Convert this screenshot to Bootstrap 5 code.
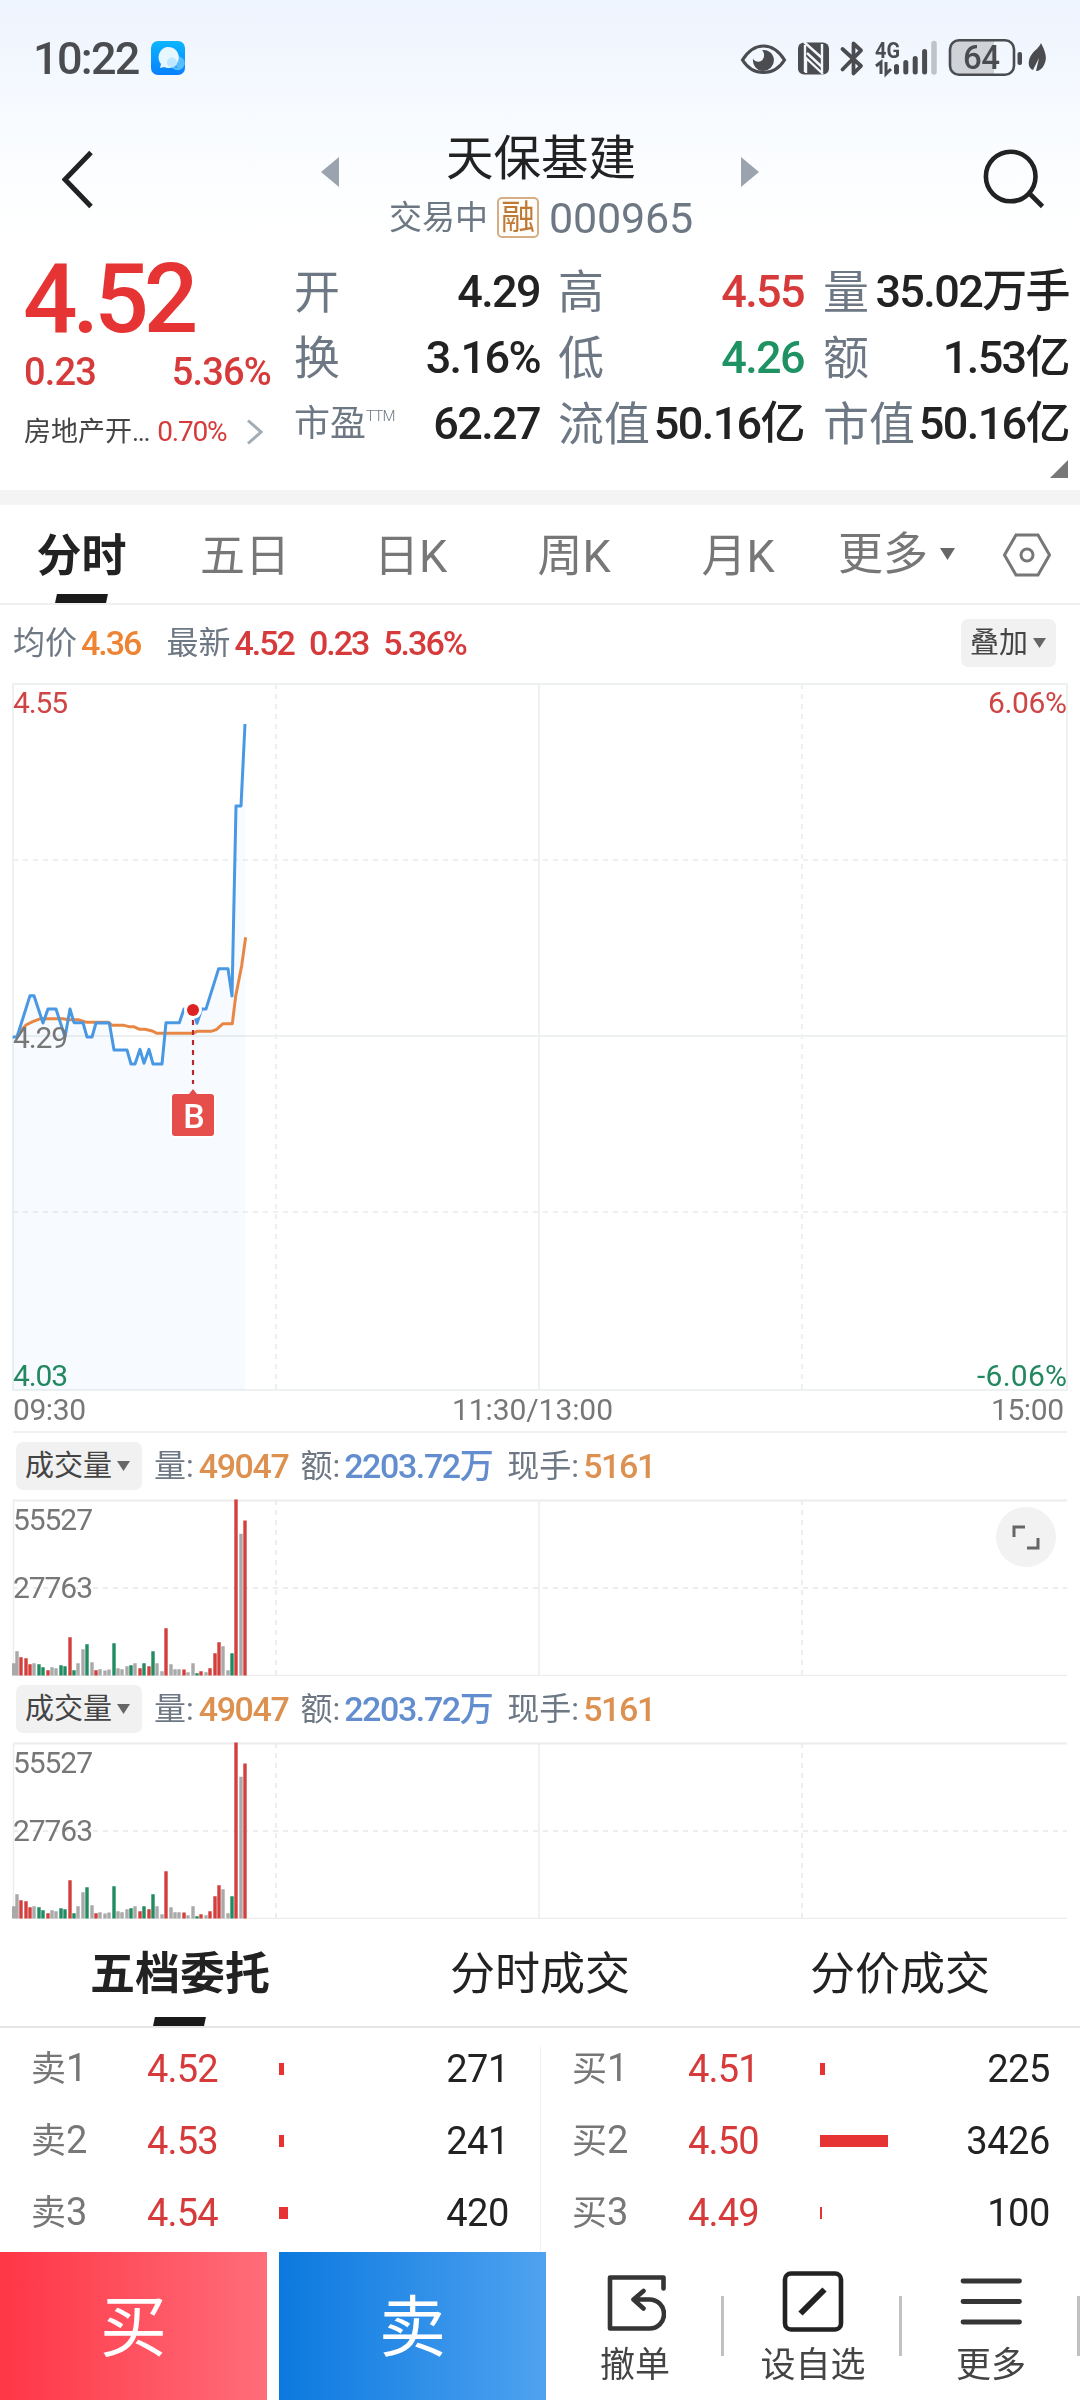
<!DOCTYPE html>
<html lang="zh-CN">
<head>
<meta charset="utf-8">
<meta name="viewport" content="width=device-width, initial-scale=1">
<title>天保基建 000965</title>
<link href="https://cdn.jsdelivr.net/npm/bootstrap@5.3.0/dist/css/bootstrap.min.css" rel="stylesheet">
<style>
  body{width:1080px;height:2400px;overflow:hidden;margin:0;background:#fff;color:#222;font-family:Roboto,"Noto Sans CJK SC",sans-serif;line-height:1;white-space:nowrap}
  svg{display:block;flex:none}
  svg text{font-family:Roboto,"Noto Sans CJK SC",sans-serif}
  .top-area{height:490px;background:linear-gradient(#eef4fe 0,#f5f9ff 90px,#fdfeff 190px,#fff 256px)}
  .status-bar{height:116px;padding:0 25px 0 33px}
  .clock{font-size:45px;font-weight:500;color:#4a4c4f;letter-spacing:-1.7px;line-height:118px;padding-top:2px}
  .stock-head{height:140px;padding:0 0 0 62px}
  .stock-name{font-size:47.5px;line-height:60px;font-weight:400}
  .stock-sub{font-size:33px;color:#6d7884;height:56px}
  .margin-tag{width:42px;height:41px;border:2px solid #d6ad84;border-radius:5px;color:#bf7935;font-size:34px;line-height:36px;background:#fffdf9}
  .code-no{font-size:43px;letter-spacing:-.2px}
  .slate{color:#6d7884}
  .up{color:#d63a3a}.up-strong{color:#e63434}.down{color:#1e9263}
  .quote-left{width:294px;padding-left:24px}
  .last-price{font-size:96px;font-weight:500;letter-spacing:-5px;line-height:86px;height:91px;margin-left:-1px}
  .change-row{font-size:38px;font-weight:500;line-height:44px;width:247px;letter-spacing:-.8px}
  .sector-row{font-size:27px;line-height:44px;color:#444;margin-top:16px}
  .quote-grid{gap:18px;padding-top:3px}
  .quote-col{width:246px}
  .quote-col:last-child{margin-left:1px}
  .quote-cell{height:66px;font-size:46px;line-height:66px}
  .quote-cell b{font-weight:500;letter-spacing:-1.6px;font-size:45px}
  .quote-cell .slate{font-size:46px}
  .quote-cell .pe{font-size:36px}
  .pe sup{font-size:15px;font-weight:300;top:-15px;left:0;line-height:0;letter-spacing:-.8px}
  .band{height:15px;background:#f4f4f4}
  .period-tabs{height:100px;border-bottom:2px solid #f0f0f0;font-size:45px;color:#777;line-height:103px}
  .period-tabs .now{color:#222;font-weight:700}
  .tab-cell{position:relative;text-align:center;height:98px}
  .now::after{content:"";position:absolute;left:50%;bottom:0;width:51px;height:9px;margin-left:-26px;background:#1a1a1a;transform:skewX(-12deg)}
  .info-row{height:71px;padding:5px 24px 0 13px;font-size:32px}
  .info-row b,.vol-head b{font-weight:500;font-size:34px;letter-spacing:-1.4px}
  .info-row b{letter-spacing:-2px}
  .chip{height:48px;background:#f1f1f1;border-radius:7px;font-size:29px;color:#444;padding:0 10px 0 9px}
  .vol-head{height:62px;padding:4px 0 0 16px;font-size:32px;line-height:40px}
  .vol-head .chip{width:126px}
  .amber{color:#dc9150}.azure{color:#628dcf}.tangerine{color:#ee8433}
  .book-tabs{height:109px;border-bottom:2px solid #e5e5e5;font-size:45px;line-height:111px}
  .book-tabs .tab-cell{flex:1;height:107px}
  .book{height:224px;padding-top:5px}
  .book-side{width:540px}
  .book-line{height:72px;line-height:74px;font-size:38px;padding:0 31px 0 31px}
  .book-side + .book-side .book-line,.book-div + .book-side .book-line{padding-left:32px;padding-right:30px}
  .book-div{width:1px;height:206px;background:#f0f0f0;margin-top:14px;margin-right:-1px}
  .lvl{width:116px;color:#777}.lvl i{font-style:normal;font-size:35px}
  .px{width:132px;letter-spacing:-.8px}
  .qty{letter-spacing:-.4px}
  .depth{height:12px;background:#e63434}
  .bottom-bar{height:148px}
  .trade{width:267px;height:148px;color:#fff;font-size:67px;line-height:152px}
  .buy{background:linear-gradient(90deg,#ff3646,#ff6d79);margin-right:12px}
  .sell{background:linear-gradient(90deg,#0b79df,#4fa2f0)}
  .tool{width:178px;position:relative;font-size:35px;color:#444;padding-top:18px}
  .tool::after{content:"";position:absolute;right:0;top:44px;width:3px;height:60px;background:#c1c1c1}
  .tool span{line-height:40px;margin-top:12px}
</style>
</head>
<body class="d-flex flex-column">
<header class="top-area flex-shrink-0">
  <div class="status-bar d-flex align-items-center">
    <span class="clock">10:22</span>
    <svg style="margin-left:12px" width="34" height="34" viewBox="0 0 34 34">
      <defs><linearGradient id="msg" x2="0" y2="1"><stop stop-color="#0cb6ff"/><stop offset="1" stop-color="#0780ff"/></linearGradient></defs>
      <rect width="34" height="34" rx="7" fill="url(#msg)"/><path d="M20 24a7 7 0 1 0 2-7l4 10z" fill="#56bdff"/><path d="M16 6a10.500 10.500 0 1 1-3 20l-4 1 1-4A10.500 10.500 0 0 1 16 6z" fill="#e6f7ff"/><circle cx="21" cy="21.500" r="5" fill="#bfe7ff"/>
    </svg>
    <svg class="ms-auto" width="315" height="44" viewBox="740 36 315 44" fill="#4a4c4f">
      <path d="M742.500 60c5-8 12-14 21-14s16 6 21 14c-5 8-12 12.500-21 12.500S747.500 68 742.500 60z" fill="none" stroke="#4a4c4f" stroke-width="3.200"/>
      <path d="M762 50a10.500 10.500 0 1 1-9 9c2 3 8 4 10 0 2-3 1-7-1-9z"/>
      <rect x="798" y="42.500" width="31" height="32" rx="6"/><path d="M804 42l18 16V44M805 72V45M823 74l-17-16V73M822 44v28" fill="none" stroke="#f3f7fe" stroke-width="2.400"/><path d="M807 53l15 14" stroke="#f3f7fe" stroke-width="2.400"/>
      <path d="M842.500 49l18.500 17-7.500 7.500V43.500l7.500 7-18.500 19" fill="none" stroke="#4a4c4f" stroke-width="3.800" stroke-linecap="round" stroke-linejoin="round"/>
      <text x="875" y="57.500" font-size="22" font-weight="700" textLength="25" lengthAdjust="spacingAndGlyphs">4G</text>
      <path d="M876 66l5-4v12M886 62v12l5-5" fill="none" stroke="#4a4c4f" stroke-width="3"/>
      <path d="M896.500 66.500v5.500M905.800 62.500V72M915.200 58.500V72M924.600 51.500V72" stroke="#4a4c4f" stroke-width="5" stroke-linecap="round"/><path d="M934 43.500V72" stroke="#bfc3c9" stroke-width="5.500" stroke-linecap="round"/>
      <path d="M958 40h36v35h-36q-8 0-8-8V48q0-8 8-8z" fill="#cfd2d7"/><rect x="950" y="40.300" width="64" height="34.500" rx="9" fill="none" stroke="#4a4c4f" stroke-width="2.600"/>
      <rect x="1017.500" y="52" width="4.500" height="13" rx="2"/>
      <text x="963" y="69.300" font-size="33" font-weight="500" textLength="37">64</text>
      <path d="M1041 43c4 8 7 15 3 22-2 4-5 6-8 6l3-13-6 12c-6-2-5-11-1-16 3-4 7-6 9-11z"/>
    </svg>
  </div>
  <div class="stock-head d-flex">
    <svg class="mt-4" width="34" height="76" viewBox="62 140 34 76" fill="none" stroke="#222" stroke-width="5"><path d="M91 152.500 65 179.500 91 206.500"/></svg>
    <div class="d-flex" style="margin-left:225px">
      <svg width="20" height="110" viewBox="321 116 20 110"><path d="M321 172l18-15v30z" fill="#9ba4ae"/></svg>
      <div class="d-flex flex-column align-items-center" style="width:400px;padding-top:13px">
        <div class="stock-name">天保基建</div>
        <div class="stock-sub d-flex align-items-center">交易中<span class="margin-tag d-flex justify-content-center" style="margin-left:9px">融</span><span class="code-no" style="margin-left:10px;padding-top:2px">000965</span></div>
      </div>
      <svg width="20" height="110" viewBox="741 116 20 110"><path d="M759 172l-18-15v30z" fill="#9ba4ae"/></svg>
    </div>
    <svg class="mt-4" style="margin-left:219px" width="66" height="76" viewBox="980 140 66 76" fill="none" stroke="#222" stroke-width="4.600"><circle cx="1010.700" cy="176.500" r="24.800"/><path d="M1029.500 193.500 1042.500 206.500"/></svg>
  </div>
  <div class="d-flex">
    <div class="quote-left">
      <div class="last-price up-strong">4.52</div>
      <div class="change-row up d-flex justify-content-between" style="margin-top:3px"><span>0.23</span><span>5.36%</span></div>
      <div class="sector-row d-flex align-items-center"><span>房地产开<span style="letter-spacing:-1.4px">...</span></span><span class="up" style="font-size:28px;letter-spacing:-1.2px;margin-left:8px">0.70%</span>
        <svg style="margin-left:20px" width="18" height="28" viewBox="0 0 18 28"><path d="M2 2.500 15 14 2 25.500" fill="none" stroke="#a3abb3" stroke-width="3"/></svg></div>
    </div>
    <div class="quote-grid d-flex">
      <div class="quote-col">
        <div class="quote-cell d-flex justify-content-between"><span class="slate">开</span><b>4.29</b></div>
        <div class="quote-cell d-flex justify-content-between"><span class="slate">换</span><b>3.16%</b></div>
        <div class="quote-cell d-flex justify-content-between"><span class="slate pe">市盈<sup>TTM</sup></span><b>62.27</b></div>
      </div>
      <div class="quote-col">
        <div class="quote-cell d-flex justify-content-between"><span class="slate">高</span><b class="up">4.55</b></div>
        <div class="quote-cell d-flex justify-content-between"><span class="slate">低</span><b class="down">4.26</b></div>
        <div class="quote-cell d-flex justify-content-between"><span class="slate">流值</span><b>50.16亿</b></div>
      </div>
      <div class="quote-col">
        <div class="quote-cell d-flex justify-content-between"><span class="slate">量</span><b>35.02万手</b></div>
        <div class="quote-cell d-flex justify-content-between"><span class="slate">额</span><b>1.53亿</b></div>
        <div class="quote-cell d-flex justify-content-between"><span class="slate">市值</span><b>50.16亿</b></div>
        <svg class="ms-auto" style="margin-top:3px;margin-right:1px" width="18" height="18" viewBox="0 0 18 18"><path d="M18 0v18H0z" fill="#777"/></svg>
      </div>
    </div>
  </div>
</header>
<div class="band flex-shrink-0"></div>
<nav class="period-tabs d-flex flex-shrink-0">
  <div class="tab-cell now" style="width:163px">分时</div>
  <div class="tab-cell" style="width:164px">五日</div>
  <div class="tab-cell" style="width:167px">日K</div>
  <div class="tab-cell" style="width:160px">周K</div>
  <div class="tab-cell" style="width:168px">月K</div>
  <div class="tab-cell d-flex align-items-center" style="width:181px;padding-left:16px">更多<svg style="margin-left:12px" width="15" height="12" viewBox="0 0 15 12"><path d="M0 0h15L7.500 12z" fill="#666"/></svg></div>
  <svg style="margin-top:28px" width="48" height="44" viewBox="0 0 48 44" fill="none" stroke="#777" stroke-width="3"><path d="M13 2h22l11.500 20L35 42H13L1.500 22z"/><circle cx="24" cy="22" r="6"/></svg>
</nav>
<div class="info-row d-flex align-items-center flex-shrink-0">
  <span class="slate">均价</span><b class="tangerine" style="margin-left:4px">4.36</b>
  <span class="slate" style="margin-left:26px">最新</span><b class="up" style="margin-left:4px">4.52</b><b class="up" style="margin-left:15px">0.23</b><b class="up" style="margin-left:15px">5.36%</b>
  <span class="chip d-flex align-items-center ms-auto">叠加<svg style="margin-left:5px" width="13" height="10" viewBox="0 0 13 10"><path d="M0 0h13L6.500 10z" fill="#666"/></svg></span>
</div>
<svg class="flex-shrink-0" width="1080" height="757" viewBox="0 676 1080 757">
  <g fill="none" stroke="#edf1f0" stroke-width="2"><path d="M13 684H1067V1390H13zM13 1036H1067M539 684V1390M13 1432H1067"/><path d="M13 860H1067M13 1212H1067M276 684V1390M802 684V1390" stroke="#efefef" stroke-dasharray="5 5"/></g>
  <g transform="translate(0 700) scale(.33333)" fill="none" stroke-linejoin="round">
    <path id="area" fill="#f7fbff" style="mix-blend-mode:multiply"/>
    <path d="M50 1008l28-33 20-10 24-9h68l15 3h30l25 8h65l12 9h35l15 4h14l18 8h16l22 5 14 7h108l12-6h42l16-5 20-18h28l10-82 18-92 12-85" stroke="#e88743" stroke-width="9"/>
    <path id="price" stroke="#4898e3" stroke-width="9"/>
  </g>
  <circle cx="193" cy="1010" r="9" fill="#fff"/><circle cx="193" cy="1010" r="6" fill="#dc2222"/>
  <path d="M193 1020V1084" stroke="#b8292e" stroke-width="2.200" stroke-dasharray="5 5"/>
  <rect x="170" y="1092" width="46" height="46" rx="6" fill="#fff"/><path d="M189 1094l4-5 4 5h14q3 0 3 3v36q0 3-3 3h-36q-3 0-3-3v-36q0-3 3-3z" fill="#e54e4b"/>
  <text x="194" y="1127.500" font-size="34" font-weight="500" fill="#fff" text-anchor="middle">B</text>
  <g font-size="30">
    <g fill="#cf4444"><text x="13" y="713" textLength="55">4.55</text><text x="988" y="713" textLength="79">6.06%</text></g>
    <text x="13" y="1048" textLength="55" fill="#777">4.29</text>
    <g fill="#23885f"><text x="13" y="1386" textLength="55">4.03</text><text x="977" y="1386" textLength="90">-6.06%</text></g>
    <g fill="#777"><text x="13" y="1420" textLength="73">09:30</text><text x="452" y="1420" textLength="161">11:30/13:00</text><text x="991" y="1420" textLength="73">15:00</text></g>
  </g>
</svg>
<section class="flex-shrink-0">
  <div class="vol-head d-flex align-items-center"><span class="chip d-flex align-items-center">成交量<svg style="margin-left:5px" width="13" height="10" viewBox="0 0 13 10"><path d="M0 0h13L6.500 10z" fill="#666"/></svg></span>
    <span class="slate" style="margin-left:12px">量:</span><b class="amber" style="margin-left:5px">49047</b><span class="slate" style="margin-left:12px">额:</span><b class="azure" style="margin-left:4px">2203.72万</b><span class="slate" style="margin-left:15px">现手:</span><b class="amber" style="margin-left:4px">5161</b></div>
  <svg width="1080" height="181" viewBox="0 0 1080 181">
    <g id="volplot"><path d="M13 5.500H1067" stroke="#ececec" stroke-width="2"/><path d="M13 180.500H1067M13.500 5V180M539 5V180" stroke="#ededed" stroke-width="1.500"/><path d="M13 93H1067M276 5V180M802 5V180" stroke="#ededed" stroke-width="2" stroke-dasharray="5 5"/>
      <g font-size="30" fill="#777"><text x="13" y="35" textLength="80">55527</text><text x="13" y="103" textLength="80">27763</text></g>
      <path id="volr" stroke="#d23f3d" stroke-width="3.400"/><path id="vole" stroke="#a9a9a9" stroke-width="3.400"/><path id="volg" stroke="#218c62" stroke-width="3.400"/></g>
    <circle cx="1026" cy="42" r="30" fill="#f2f2f2"/><path d="M1014 42V32h11M1038 43v10h-11" fill="none" stroke="#666" stroke-width="3"/>
  </svg>
</section>
<section class="flex-shrink-0">
  <div class="vol-head d-flex align-items-center"><span class="chip d-flex align-items-center">成交量<svg style="margin-left:5px" width="13" height="10" viewBox="0 0 13 10"><path d="M0 0h13L6.500 10z" fill="#666"/></svg></span>
    <span class="slate" style="margin-left:12px">量:</span><b class="amber" style="margin-left:5px">49047</b><span class="slate" style="margin-left:12px">额:</span><b class="azure" style="margin-left:4px">2203.72万</b><span class="slate" style="margin-left:15px">现手:</span><b class="amber" style="margin-left:4px">5161</b></div>
  <svg width="1080" height="181" viewBox="0 0 1080 181"><use href="#volplot"/></svg>
</section>
<nav class="book-tabs d-flex flex-shrink-0">
  <div class="tab-cell now fw-bold">五档委托</div><div class="tab-cell">分时成交</div><div class="tab-cell">分价成交</div>
</nav>
<section class="book d-flex flex-shrink-0">
  <div class="book-side">
    <div class="book-line d-flex align-items-center"><span class="lvl"><i>卖</i>1</span><span class="px up">4.52</span><span class="depth" style="width:5px"></span><span class="qty ms-auto">271</span></div>
    <div class="book-line d-flex align-items-center"><span class="lvl"><i>卖</i>2</span><span class="px up">4.53</span><span class="depth" style="width:5px"></span><span class="qty ms-auto">241</span></div>
    <div class="book-line d-flex align-items-center"><span class="lvl"><i>卖</i>3</span><span class="px up">4.54</span><span class="depth" style="width:9px"></span><span class="qty ms-auto">420</span></div>
  </div>
  <div class="book-div"></div>
  <div class="book-side">
    <div class="book-line d-flex align-items-center"><span class="lvl"><i>买</i>1</span><span class="px up">4.51</span><span class="depth" style="width:5px"></span><span class="qty ms-auto">225</span></div>
    <div class="book-line d-flex align-items-center"><span class="lvl"><i>买</i>2</span><span class="px up">4.50</span><span class="depth" style="width:68px"></span><span class="qty ms-auto">3426</span></div>
    <div class="book-line d-flex align-items-center"><span class="lvl"><i>买</i>3</span><span class="px up">4.49</span><span class="depth" style="width:2px"></span><span class="qty ms-auto">100</span></div>
  </div>
</section>
<footer class="bottom-bar d-flex flex-shrink-0">
  <div class="trade buy text-center">买</div><div class="trade sell text-center">卖</div>
  <div class="tool d-flex flex-column align-items-center">
    <svg width="62" height="64" viewBox="604.500 2270 62 64" fill="none" stroke="#353535" stroke-width="4.600" stroke-linecap="round" stroke-linejoin="round"><path d="M664 2288.500V2277.500H610.500V2328.500H650a14.500 14.500 0 0 0 0-29H634M644 2291l-10 8.500 10 9"/></svg>
    <span>撤单</span></div>
  <div class="tool d-flex flex-column align-items-center">
    <svg width="62" height="64" viewBox="782.500 2270 62 64" fill="none" stroke="#222" stroke-width="4.600"><rect x="785.500" y="2273.500" width="56" height="56" rx="6"/><path d="M825 2289.500 801 2313.500" stroke-width="6"/></svg>
    <span>设自选</span></div>
  <div class="tool d-flex flex-column align-items-center">
    <svg width="62" height="64" viewBox="960.500 2270 62 64" stroke="#353535" stroke-width="4.800" stroke-linecap="round"><path d="M963.500 2281H1020M963.500 2301.500H1020M963.500 2322H1020"/></svg>
    <span>更多</span></div>
</footer>
<script>
  // Price series: one vertex per change of the minute quote
  const pts = "38,1011 51,1011 90,887 102,887 129,969 144,927 168,927 195,1011 210,927 222,968 249,968 261,1011 276,1011 288,969 328,969 342,1050 381,1050 393,1092 405,1092 420,1048 432,1090 447,1048 459,1092 486,1092 498,968 538,968 552,927 579,927 591,970 605,927 618,927 656,806 684,806 696,888 708,318 723,318 735,72";
  document.getElementById("price").setAttribute("d", "M" + pts);
  document.getElementById("area").setAttribute("d", "M" + pts + " 735,2070 38,2070Z");
  // Minute volume: [x, height, colour] with r rise, g fall, e even
  const vol = "41,37,e 51,73,e 63,55,r 78,52,r 90,34,r 102,37,e 117,34,g 129,25,g 144,16,r 156,25,e 168,22,e 183,31,g 195,28,g 210,115,r 222,16,g 234,37,e 249,79,e 261,94,g 276,40,e 288,16,r 300,19,e 315,15,e 327,18,e 342,97,g 354,22,e 366,19,e 381,28,e 393,31,g 405,37,e 420,22,r 432,37,g 447,28,r 459,73,g 471,37,e 486,13,e 498,142,r 513,34,e 525,19,e 537,19,e 552,18,r 564,10,e 579,37,e 591,7,g 603,13,r 618,10,e 630,22,r 645,67,r 657,100,r 669,88,e 684,16,e 696,67,g 708,528,r 723,425,e 735,465,r";
  const d = {r:"", g:"", e:""};
  vol.split(" ").forEach(v => { const [x, h, c] = v.split(","); d[c] += `M${(x/3).toFixed(1)} 180.500V${(180.5-h/3).toFixed(1)}`; });
  for (const c in d) document.getElementById("vol" + c).setAttribute("d", d[c]);
</script>
<script src="https://cdn.jsdelivr.net/npm/bootstrap@5.3.0/dist/js/bootstrap.bundle.min.js"></script>
</body>
</html>
